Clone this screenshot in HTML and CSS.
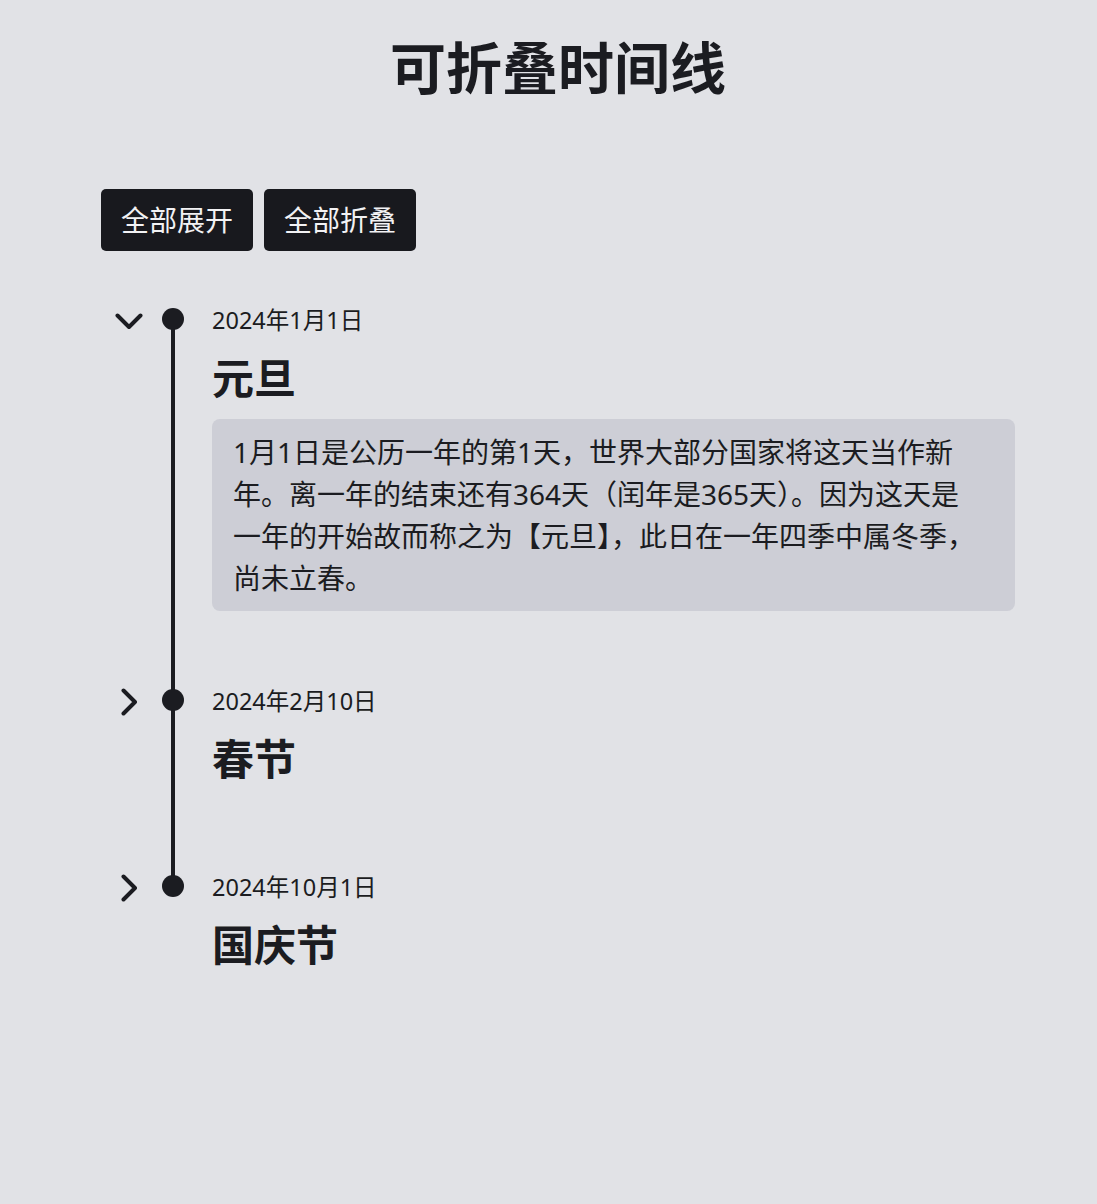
FILE: index.html
```html
<!DOCTYPE html>
<html lang="zh-CN">
	<head>
		<meta charset="utf-8">
		<title>可折叠时间线</title>
		<link rel="stylesheet" href="styles.css">
	</head>
	<body>
		<div class="page">
			<h1 class="title">可折叠时间线</h1>

			<div class="actions">
				<button type="button" class="btn" id="expandAll">全部展开</button>
				<button type="button" class="btn" id="collapseAll">全部折叠</button>
			</div>

			<ul class="timeline">
				<li class="item open">
					<button type="button" class="toggle" aria-label="切换">
						<svg width="28" height="28" viewBox="0 0 28 28"><polyline points="2.5,8.5 14,20 25.5,8.5" /></svg>
					</button>
					<div class="marker"><span class="seg-top"></span><span class="dot"></span><span class="seg-bottom"></span></div>
					<div class="content">
						<div class="date">2024年1月1日</div>
						<h2 class="name">元旦</h2>
						<div class="body">
							<p class="desc">1月1日是公历一年的第1天，世界大部分国家将这天当作新年。离一年的结束还有364天（闰年是365天）。因为这天是一年的开始故而称之为【元旦】，此日在一年四季中属冬季，尚未立春。</p>
						</div>
					</div>
				</li>
				<li class="item">
					<button type="button" class="toggle" aria-label="切换">
						<svg width="28" height="28" viewBox="0 0 28 28"><polyline points="2.5,8.5 14,20 25.5,8.5" /></svg>
					</button>
					<div class="marker"><span class="seg-top"></span><span class="dot"></span><span class="seg-bottom"></span></div>
					<div class="content">
						<div class="date">2024年2月10日</div>
						<h2 class="name">春节</h2>
						<div class="body">
							<p class="desc">春节是农历新年的第一天，是中国最隆重的传统节日。</p>
						</div>
					</div>
				</li>
				<li class="item">
					<button type="button" class="toggle" aria-label="切换">
						<svg width="28" height="28" viewBox="0 0 28 28"><polyline points="2.5,8.5 14,20 25.5,8.5" /></svg>
					</button>
					<div class="marker"><span class="seg-top"></span><span class="dot"></span><span class="seg-bottom"></span></div>
					<div class="content">
						<div class="date">2024年10月1日</div>
						<h2 class="name">国庆节</h2>
						<div class="body">
							<p class="desc">10月1日是中华人民共和国国庆节。</p>
						</div>
					</div>
				</li>
			</ul>
		</div>
		<script src="script.js"></script>
	</body>
</html>
```

FILE: styles.css
```css
body {
	margin: 0;
	background: #e1e2e6;
	color: #1b1c21;
	font-family: "Noto Sans", "Noto Sans CJK SC", sans-serif;
}

.page {
	width: 914px;
	margin: 0 auto;
	padding: 34px 0 60px 19px;
}

.title {
	margin: 0;
	text-align: center;
	font-size: 56px;
	line-height: 67px;
	font-weight: 700;
}

.actions {
	display: flex;
	gap: 11px;
	margin-top: 88px;
}

.btn {
	background: #18191e;
	color: #f2f2f4;
	border: none;
	border-radius: 5px;
	padding: 10px 20px;
	font-family: inherit;
	font-size: 28px;
	line-height: 42px;
	cursor: pointer;
}

.timeline {
	list-style: none;
	margin: 53px 0 0 0;
	padding: 0;
}

.item {
	display: grid;
	grid-template-columns: 42px 60px 1fr;
	align-items: stretch;
}

.toggle {
	justify-self: end;
	align-self: start;
	width: 28px;
	height: 28px;
	margin-top: 3px;
	padding: 0;
	border: none;
	background: none;
	cursor: pointer;
}

.toggle svg {
	display: block;
	fill: none;
	stroke: #1b1c21;
	stroke-width: 4;
	stroke-linecap: round;
	stroke-linejoin: round;
	transform: rotate(-90deg);
}

.item.open .toggle svg {
	transform: none;
}

.marker {
	display: flex;
	flex-direction: column;
	align-items: center;
}

.seg-top {
	width: 4px;
	height: 5px;
	background: #1b1c21;
}

.dot {
	width: 22px;
	height: 22px;
	border-radius: 50%;
	background: #1b1c21;
	margin-top: -1px;
}

.seg-bottom {
	flex: 1;
	width: 4px;
	margin-top: -1px;
	background: #1b1c21;
}

.item:first-child .seg-top {
	visibility: hidden;
}

.item:last-child .seg-bottom {
	visibility: hidden;
}

.content {
	margin-left: 9px;
	padding-bottom: 74px;
}

.date {
	font-size: 23.5px;
	line-height: 33px;
}

.name {
	margin: 16px 0 0 0;
	font-size: 42px;
	line-height: 50px;
	font-weight: 700;
}

.body {
	padding-top: 13px;
}

.desc {
	display: none;
	margin: 3px 0 0 0;
	background: #cdced6;
	border-radius: 8px;
	padding: 12px 38px 12px 21px;
	font-size: 28px;
	line-height: 42px;
}

.item.open .desc {
	display: block;
}
```

FILE: script.js
```js
// toggle one item or all items
var items = document.querySelectorAll(".item");

items.forEach(function (item) {
	item.querySelector(".toggle").addEventListener("click", function () {
		item.classList.toggle("open");
	});
});

document.getElementById("expandAll").addEventListener("click", function () {
	items.forEach(function (item) { item.classList.add("open"); });
});

document.getElementById("collapseAll").addEventListener("click", function () {
	items.forEach(function (item) { item.classList.remove("open"); });
});
```
